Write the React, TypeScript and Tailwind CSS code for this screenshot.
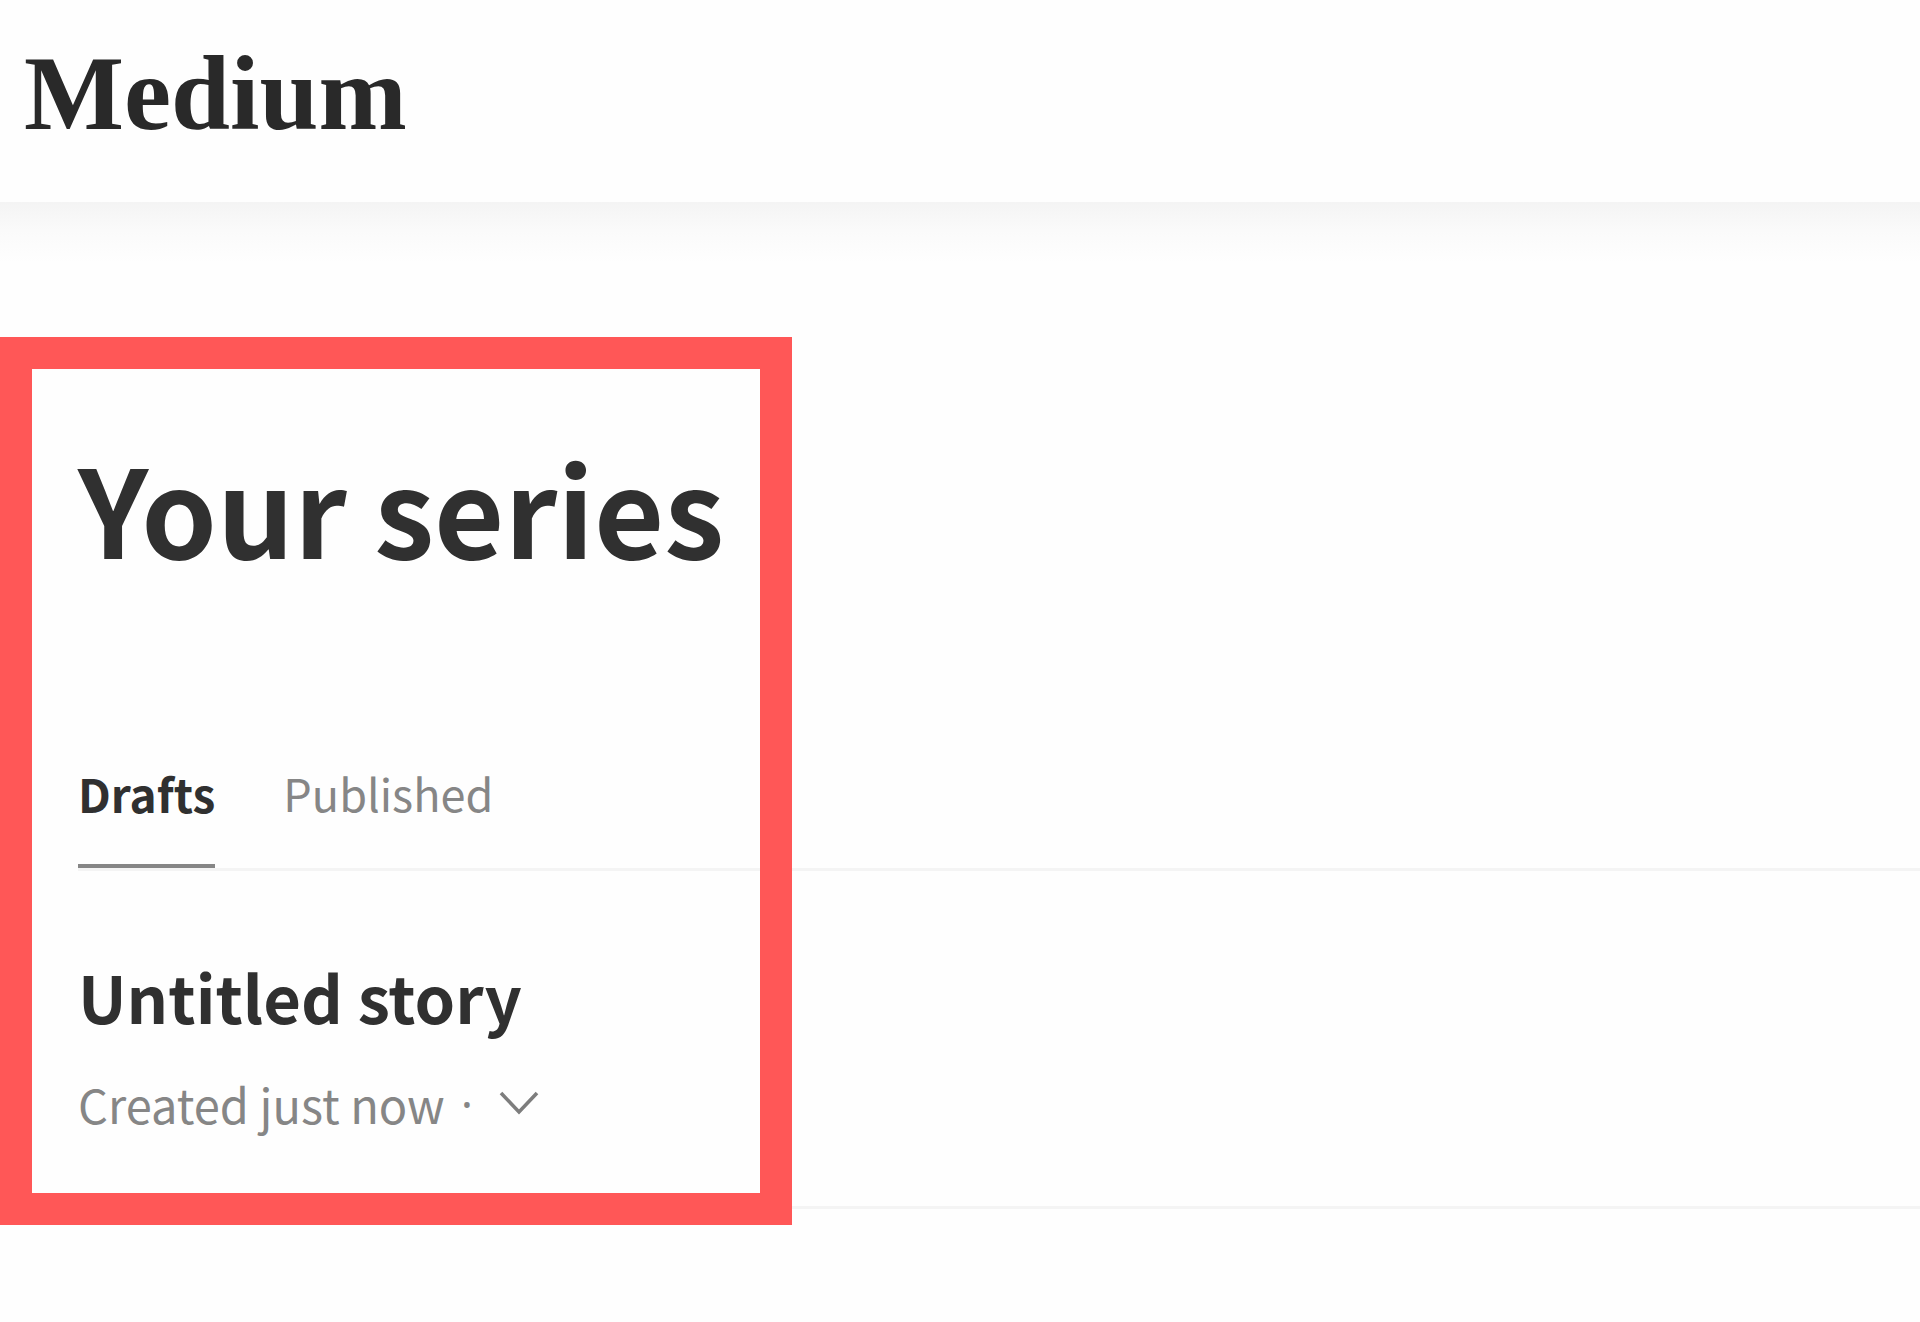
const sans = "font-['Noto_Sans_CJK_SC','Open_Sans',sans-serif]";

function Header() {
  return (
    <>
      <header className="bg-[#fefefe] px-6 pt-8 pb-[46px]">
        <a
          href="#home"
          className="block w-fit font-['Liberation_Serif',serif] text-[106px] leading-[124px] font-bold text-[#292929]"
        >
          Medium
        </a>
      </header>
      <div
        aria-hidden="true"
        className="h-20 bg-linear-to-b from-[#f4f4f4] via-[#fafafa] via-35% to-[#fefefe] to-75%"
      />
    </>
  );
}

function Tabs() {
  return (
    <nav aria-label="Series" className="mt-38 flex items-end gap-[68px] border-b-3 border-[#f4f4f4]">
      <button
        type="button"
        aria-current="page"
        className="border-b-4 border-[#868686] pb-[35px] text-[46px] leading-[72px] font-bold text-[#303030]"
      >
        Drafts
      </button>
      <button type="button" className="border-b-4 border-transparent pb-[35px] text-[45px] leading-[72px] text-[#868686]">
        Published
      </button>
    </nav>
  );
}

function Story() {
  return (
    <article className="border-b-3 border-[#f4f4f4] pt-[75px] pb-[66px]">
      <h2 className="text-[65px] leading-[100px] font-bold text-[#303030]">Untitled story</h2>
      <div className="mt-[22px] flex items-center text-[47px] leading-[72px] text-[#868686]">
        <p>Created just now</p>
        <span className="ml-4 font-['Open_Sans',sans-serif]">·</span>
        <button type="button" aria-label="Story options" className="ml-6">
          <svg width="44" height="30" viewBox="0 0 44 30" fill="none" stroke="#7d7d7d" strokeWidth="3.6">
            <path d="M4 4 L22 23 L40 4" />
          </svg>
        </button>
      </div>
    </article>
  );
}

export default function App() {
  return (
    <div className={`min-h-screen bg-[#fefefe] ${sans}`}>
      <Header />
      <main className="relative mt-[55px] pt-18 pl-[78px]">
        <h1 className="text-[121px] leading-[196px] font-bold text-[#303030]">Your series</h1>
        <Tabs />
        <Story />
        <div
          aria-hidden="true"
          className="pointer-events-none absolute top-0 left-0 -bottom-4 w-[792px] border-32 border-[#ff5757]"
        />
      </main>
    </div>
  );
}
